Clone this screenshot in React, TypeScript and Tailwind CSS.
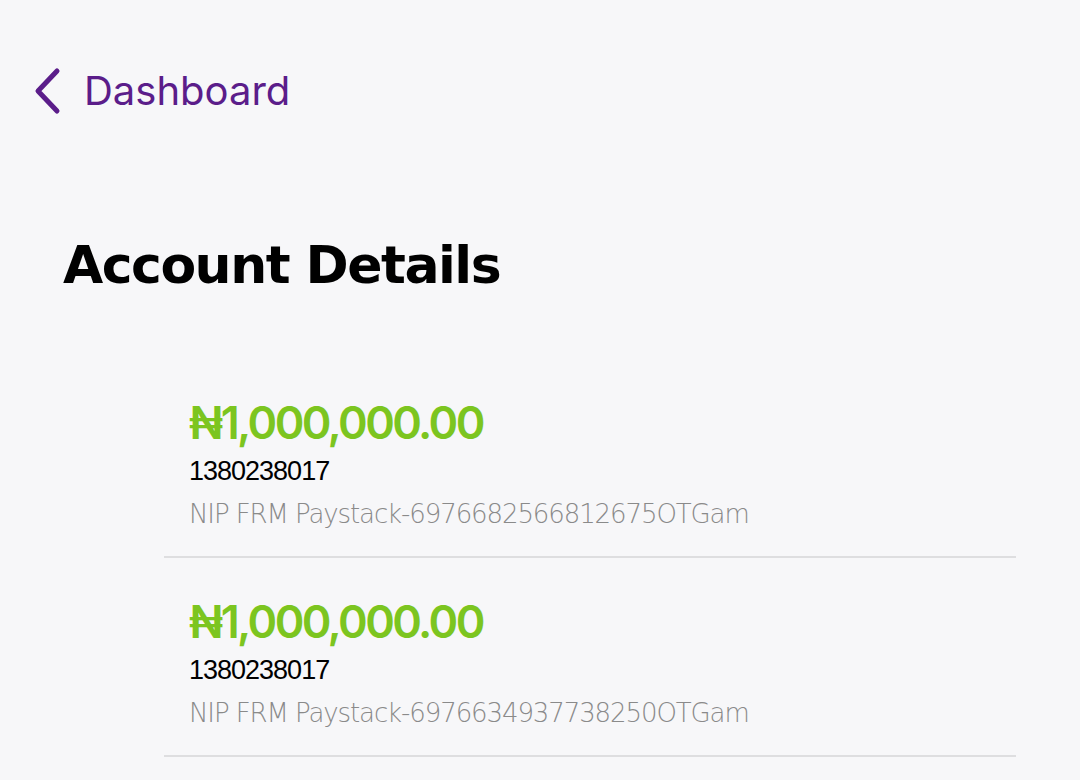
const items = [
  { amount: "₦1,000,000.00", account: "1380238017", desc: "NIP FRM Paystack-6976682566812675OTGam" },
  { amount: "₦1,000,000.00", account: "1380238017", desc: "NIP FRM Paystack-6976634937738250OTGam" },
];

function ChevronLeft() {
  return (
    <svg width="30" height="48" viewBox="0 0 30 48" fill="none">
      <path d="M25 4 L6 24 L25 44" stroke="#5b1d8a" strokeWidth="5" strokeLinecap="round" strokeLinejoin="round" />
    </svg>
  );
}

export default function App() {
  return (
    <div className="w-[1080px] h-[780px] overflow-hidden bg-[#f7f7f9]" style={{ fontFamily: '"DejaVu Sans", sans-serif' }}>
      <div className="flex items-center gap-[22px] pl-[32px] pt-[67px]">
        <ChevronLeft />
        <span className="text-[40px] leading-none text-[#5b1d8a] font-['Inter',sans-serif]">Dashboard</span>
      </div>
      <h1 className="pl-[63px] pt-[124px] text-[52px] leading-none font-bold text-black tracking-[-1.5px]">Account Details</h1>
      <div className="ml-[164px] mr-[64px] mt-[97px]">
        {items.map((it, i) => (
          <div key={i} className="pl-[25px] pt-[12px] pb-[29px] border-b-2 border-[#dedee0] mb-[29px]">
            <div className="text-[45px] leading-none font-semibold text-[#7cc520] tracking-[-2.6px] font-['Inter',sans-serif]">{it.amount}</div>
            <div className="mt-[13px] text-[27px] leading-none text-black tracking-[-1px] font-['Liberation_Sans',sans-serif]">{it.account}</div>
            <div className="mt-[16px] text-[26px] leading-none font-light text-[#8a8a8a] tracking-[-1.1px]">{it.desc}</div>
          </div>
        ))}
      </div>
    </div>
  );
}
